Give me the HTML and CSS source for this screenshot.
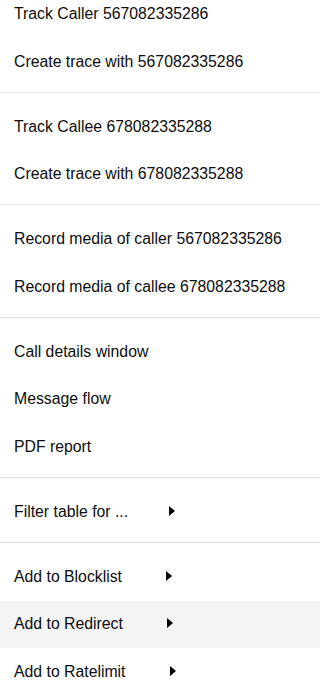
FILE: index.html
```html
<!DOCTYPE html>
<html lang="en">
<head>
<meta charset="utf-8">
<title>Context menu</title>
<link rel="stylesheet" href="styles.css">
</head>
<body>
<ul class="menu">
  <li class="item">Track Caller 567082335286</li>
  <li class="item">Create trace with 567082335286</li>
  <li class="sep"></li>
  <li class="item">Track Callee 678082335288</li>
  <li class="item">Create trace with 678082335288</li>
  <li class="sep"></li>
  <li class="item">Record media of caller 567082335286</li>
  <li class="item">Record media of callee 678082335288</li>
  <li class="sep"></li>
  <li class="item">Call details window</li>
  <li class="item">Message flow</li>
  <li class="item">PDF report</li>
  <li class="sep"></li>
  <li class="item sub"><span>Filter table for ...</span><i class="arrow arrow-filter"></i></li>
  <li class="sep"></li>
  <li class="item sub"><span>Add to Blocklist</span><i class="arrow"></i></li>
  <li class="item sub active"><span>Add to Redirect</span><i class="arrow"></i></li>
  <li class="item sub"><span>Add to Ratelimit</span><i class="arrow"></i></li>
</ul>
</body>
</html>
```

FILE: styles.css
```css
html, body {
  margin: 0;
  padding: 0;
  background: #ffffff;
}

body {
  font-family: "Liberation Sans", Arial, sans-serif;
  font-size: 15.8px;
  color: #0d0d0d;
  overflow: hidden;
}

.menu {
  list-style: none;
  margin: -9.5px 0 0 0;
  padding: 0;
}

.item {
  height: 47.5px;
  display: flex;
  align-items: center;
  padding: 0 14px;
  white-space: nowrap;
}

.item.active {
  background: #f4f4f4;
}

.sep {
  height: 1px;
  background: #e3e3e3;
  margin: 6px 0 10.5px 0;
}

.arrow {
  display: inline-block;
  width: 0;
  height: 0;
  border-left: 6px solid #000;
  border-top: 5px solid transparent;
  border-bottom: 5px solid transparent;
  margin-left: 44px;
  margin-top: -2px;
}

.arrow-filter {
  margin-left: 41px;
}
```
